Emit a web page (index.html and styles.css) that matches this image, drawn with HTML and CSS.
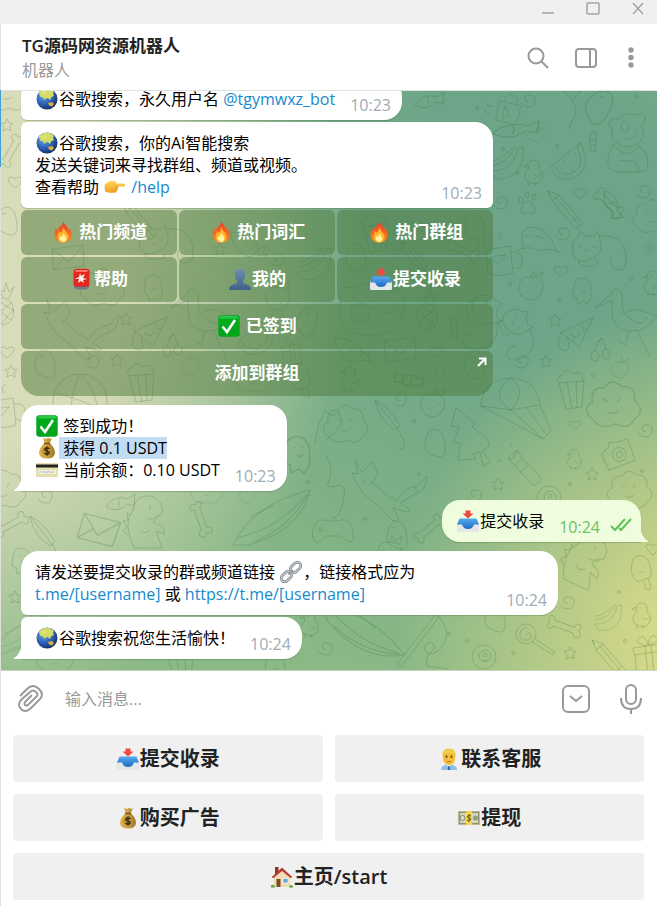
FILE: index.html
```html
<!DOCTYPE html>
<html lang="zh">
<head>
    <meta charset="UTF-8">
    <meta name="viewport" content="width=device-width, initial-scale=1.0">
    <title>TG源码网资源机器人</title>
    <link rel="stylesheet" href="styles.css">
</head>
<body>

<!-- shared emoji and wallpaper shapes -->
<svg class="defs" width="0" height="0" aria-hidden="true">
    <defs>
        <radialGradient id="sea" cx=".35" cy=".3" r=".75"><stop offset="0" stop-color="#6aa7e8"/><stop offset=".6" stop-color="#2a5fb4"/><stop offset="1" stop-color="#162d62"/></radialGradient>
        <linearGradient id="flame" x1="0" y1="0" x2="0" y2="1"><stop offset="0" stop-color="#e8402a"/><stop offset="1" stop-color="#ff8a1c"/></linearGradient>
        <linearGradient id="skin" x1="0" y1="0" x2="0" y2="1"><stop offset="0" stop-color="#ffd65a"/><stop offset="1" stop-color="#f2a21f"/></linearGradient>
        <linearGradient id="gold" x1="0" y1="0" x2="1" y2="0"><stop offset="0" stop-color="#e0b040"/><stop offset=".4" stop-color="#d3a94a"/><stop offset="1" stop-color="#9c7424"/></linearGradient>
        <linearGradient id="blue" x1="0" y1="0" x2="0" y2="1"><stop offset="0" stop-color="#56a8f0"/><stop offset="1" stop-color="#1d6cc0"/></linearGradient>
        <linearGradient id="slate" x1="0" y1="0" x2="0" y2="1"><stop offset="0" stop-color="#6f90b3"/><stop offset="1" stop-color="#3f6088"/></linearGradient>

        <symbol id="globe" viewBox="0 0 22 22">
            <circle cx="11" cy="11" r="10.5" fill="url(#sea)"/>
            <path d="M3 4.500Q6 1 11 .7L15 1.500 18 4 17 6 18 8 15.500 9 14 12 12.500 10.500 10.500 10 8.500 12 7 9.500 4.500 9 3.500 7Z" fill="#d3dc66"/>
            <path d="M5 4 9 3 11 5 9 7 6 6Z" fill="#e5e07a"/>
            <path d="M12 15l4-1 2 2-2 2.500-3-1Z" fill="#dcae45"/>
        </symbol>
        <symbol id="point" viewBox="0 0 22 22">
            <path d="M.5 9Q3 5.500 6.500 5L11 5Q13 5.500 12 7.500L20.500 7.500Q22 9 20.500 10.500L14 10.700Q15 12 13.700 13 14 14.500 12.600 15 12.500 16.500 11 16.700L5 16.700 1 15.500Z" fill="url(#skin)"/>
            <path d="M10 10.600h4M10 13h3.700M9.500 15h3" stroke="#dc9a2b" stroke-width=".7" fill="none"/>
        </symbol>
        <symbol id="fire" viewBox="0 0 22 22">
            <path d="M11 .5C13 4 17 6.500 17 9.500L18 7Q20 11 19.500 15C18.700 19.500 15.500 21.700 11 21.700S3.500 19.500 2.600 15Q2 11 4 7L5.500 10C6.500 5 11 5 11 .5Z" fill="url(#flame)"/>
            <path d="M11 6C12 10 16.300 11 16.500 16Q16 21 11 21T5.500 16C5.700 13 7 12 7 10L9 12Q11 10 11 6Z" fill="#ffb52c"/>
            <path d="M11 12Q15 16 14.300 18.500 13 21.500 11 21.300T7.500 18Q7.500 16 9 14.500L10 16Q11 14 11 12Z" fill="#fff3a0"/>
        </symbol>
        <symbol id="siren" viewBox="0 0 22 22">
            <path d="M3 17h15v2.500Q17 21.500 10.500 21.500T3 19.500Z" fill="#6d7f8d"/>
            <rect x="2.500" y=".8" width="16" height="18" rx="3" fill="#e3281f"/>
            <path d="M4 2h13l-1 2H5Z" fill="#ff7a68"/>
            <path d="M9 5l1 3 4-2-2 4 4 1-4 1 1 3-3-2-3 2 1-4-4 0 4-2Z" fill="#fff0ea"/>
        </symbol>
        <symbol id="person" viewBox="0 0 22 22">
            <path d="M11 .5C14.500 .5 16 3 16 6.500 16 9.500 15.300 11.500 14 12.500V15L20 17.500Q22 18.500 22 22H0Q0 18.500 2 17.500L8 15V12.500C6.700 11.500 6 9.500 6 6.500 6 3 7.500 .5 11 .5Z" fill="url(#slate)"/>
        </symbol>
        <symbol id="tray" viewBox="0 0 22 22">
            <path d="M0 13h22v7.500Q22 22 20.500 22h-19Q0 22 0 20.500Z" fill="#e6e7e8"/>
            <path d="M2.500 8.500h17L22 14.500h-5q-1.500 4.500-6 4.500t-6-4.500H0Z" fill="url(#blue)"/>
            <path d="M8.500 .5h5V3.500h3L11 8.500 5.500 3.500h3Z" fill="#f0493d"/>
        </symbol>
        <symbol id="check" viewBox="0 0 22 22">
            <rect x=".3" y=".3" width="21.400" height="21.400" rx="3" fill="#00a51c"/>
            <rect x="1.500" y="1" width="19" height="8" rx="2" fill="#2fc44a"/>
            <rect x="1.500" y="3.500" width="19" height="8" fill="#00ab1a"/>
            <path d="M4.500 11.500 9 17 17 5" stroke="#fff" stroke-width="2.600" fill="none"/>
        </symbol>
        <symbol id="bag" viewBox="0 0 22 22">
            <path d="M7 .8 10 2 12 .8 14.500 2 16 1.300 13.800 6Q18.700 10.500 19 16 18.500 21.500 11 21.500T3 16Q3.500 10.500 8.500 6Z" fill="url(#gold)"/>
            <path d="M8 6.500h6" stroke="#7a4e1c" stroke-width="1.500"/>
            <circle cx="11" cy="14" r="4.800" fill="#b98d35"/>
            <path d="M13.500 11.800Q11 10 9.300 11.500T11 14 12.700 16.500 8.500 16.300M11 9.500v9" stroke="#33280f" stroke-width="1.300" fill="none"/>
        </symbol>
        <symbol id="card" viewBox="0 0 22 22">
            <rect x="0" y="4" width="22" height="14" rx="1" fill="#e5dfae"/>
            <path d="M0 5.500h22v3H0Z" fill="#222"/>
            <path d="M2 11h18v4H2Z" fill="#f0eee0"/>
            <path d="M3 13.500l2-1 1 1 2-1 2 1 3-1 2 1 3-.7" stroke="#a5abb8" stroke-width=".7" fill="none"/>
        </symbol>
        <symbol id="link" viewBox="0 0 22 22">
            <g fill="none" stroke="#6c747b" stroke-width="2.600"><rect x="-6" y="-3.500" width="12" height="7" rx="3.500" transform="translate(6.500 15.500) rotate(-45)"/><rect x="-6" y="-3.500" width="12" height="7" rx="3.500" transform="translate(15.500 6.500) rotate(-45)"/></g>
            <g fill="none" stroke="#ccd1d5" stroke-width="1.300"><rect x="-6" y="-3.500" width="12" height="7" rx="3.500" transform="translate(6.500 15.500) rotate(-45)"/><rect x="-6" y="-3.500" width="12" height="7" rx="3.500" transform="translate(15.500 6.500) rotate(-45)"/></g>
            <path d="M8.500 13.500 13 9" stroke="#8d959b" stroke-width="2"/>
        </symbol>
        <symbol id="man" viewBox="0 0 22 22">
            <path d="M3 22q0-4 4-5h8q4 1 4 5Z" fill="#8fc0ea"/>
            <path d="M8 16h6l-3 3.500Z" fill="#e8eef4"/><path d="M10.300 18h1.400l.6 4h-2.600Z" fill="#2f6ba8"/>
            <rect x="5" y="2" width="12" height="15" rx="6" fill="#f5bd35"/>
            <path d="M4.300 9Q3 .5 11 .5T17.700 9L16.500 7 15 5H7L5.500 7Z" fill="#edd04d"/>
            <circle cx="8.500" cy="9" r=".9" fill="#513717"/><circle cx="13.500" cy="9" r=".9" fill="#513717"/>
            <path d="M9 13.500h4M7.500 7.500h2M12.500 7.500h2" stroke="#a46a1b" stroke-width=".8"/>
        </symbol>
        <symbol id="cash" viewBox="0 0 22 22">
            <rect x="0" y="4" width="22" height="14" fill="#b9bb98"/>
            <rect x="1.500" y="5.500" width="19" height="11" fill="#d5d6bc" stroke="#8d9274"/>
            <circle cx="4.500" cy="11" r="2.500" fill="#dfe0cb" stroke="#7b8c72"/><circle cx="17.500" cy="11" r="2.500" fill="#8ca07f"/>
            <path d="M8 4h6v14H8Z" fill="#f7d44c"/>
            <path d="M13 9Q11 7.500 9.700 9T11 11 12.300 13.200 9 13M11 7v8" stroke="#6c5419" fill="none"/>
        </symbol>
        <symbol id="house" viewBox="0 0 22 22">
            <path d="M4 1h3.500v5L4 9Z" fill="#9a3129"/>
            <path d="M3 10 11 3.500 19 10v11H3Z" fill="#efdcb4"/>
            <path d="M.8 11 11 1.500 21.200 11l-1.400 1.300L11 5 2.200 12.300Z" fill="#b73c34"/>
            <path d="M5.500 13h4v8h-4Z" fill="#7f482b"/><path d="M12 12.500h5V17h-5Z" fill="#62a8d6" stroke="#fff" stroke-width=".7"/>
            <path d="M0 19.500q2-2 4 1v1H0ZM18 21.500q1-4 4-1.500v1.500Z" fill="#62a13d"/>
        </symbol>

        <g id="d-spiral"><path d="M1 1Q-2 3-3-1T2-5 7 1 1 7-7 3"/></g>
        <g id="d-star"><path d="M0-6 2-2 6-1.500 3 1.500 4 6 0 4-4 6-3 1.500-6-1.500-2-2Z"/></g>
        <g id="d-heart"><path d="M0 6Q-7 1-7-3-5-7 0-3 5-7 7-3 7 1 0 6Z"/></g>
        <g id="d-dot"><circle r="1.500"/></g>
        <g id="d-candy"><path d="M-3-10h6l-1 4q3 2 1 5 2 3-1 5l1 5h-6l1-5q-3-2-1-5-2-3 1-5ZM-3-2h6M-2 3h5"/></g>
        <g id="d-bone"><path d="M-12-3H9Q9-8 13-7T14-1Q19 1 16 5T9 3H-11Q-13 8-16 6T-16 0Q-20-4-17-6T-12-3Z"/></g>
        <g id="d-fish"><path d="M-14 4Q-6-9 8-4L15-9 14 3 7 1Q-2 11-14 4ZM-8 1h1M-2-4q3 4 0 8"/></g>
        <g id="d-melon"><path d="M13-19Q27 6 5 17-11 20-16 5ZM13-19 10-15Q20 6 3 12-8 13-13 4M9-10v2M5 0h2M-3-2v2M-5 7h2M4 8h2M12 0h1"/></g>
        <g id="d-duck"><path d="M-4-4Q-7-12 0-13T6-4Q12 0 8 7T-6 8Q-11 1-4-4ZM-5-9-9-7-5-6M-1-9v1M1 1Q5 6 8 1M-4 9v4M2 9v4"/></g>
        <g id="d-cat"><path d="M-20 5Q-23-8-15-12L-13-18-8-13Q-3-14 1-12L5-18 7-9Q12 4-2 10T-20 5ZM6-13Q30-16 33 6 34 22 25 21T18 8M-14 11Q-17 19-2 17 8 17 3 11M-15-2l4-2M-1-3l4 2M-9 1q3 3 5-1"/></g>
        <g id="d-bear"><path d="M-14-14Q-21-22-12-25L-6-24Q-2-32 10-28L16-30Q23-25 15-17 22-7 12 0 3 7-8 1-17-4-13-15ZM-12 0Q-26 25-9 29H14Q26 28 20 11L12 1M-12 1Q0 19 13 3M-5-16a4 5 0 1 0 8 0a4 5 0 1 0-8 0M9-14v2M0-5q6 3 9-3M-8 18Q14 15 12 29"/></g>
        <g id="d-bird"><path d="M-14-23Q-18-32-9-31-3-28-5-14L-3-6Q8-14 18-8L30-4Q20 12 3 11-16 10-15-10L-15-20-32-12-17-25M-10-27v1M0-4Q14 10 20-3M2 11-2 25-9 20M10 10 23 37"/></g>
        <g id="d-berry"><path d="M-12-2Q-10-11 0-10 12-10 12 0 9 13-1 13-14 10-12-2ZM0-10 2-16 5-11 12-15 10-9M-6-3v1M1-4v1M6 0v1M-4 4v1M3 6v1"/></g>
        <g id="d-ghost"><path d="M-8-4Q-8-13 0-13T9-2Q10 9 5 13L1 10-4 13-5 7-9 5ZM-2-6v1M4-6v1M0 0q2 3 4-1"/></g>
        <g id="d-pizza"><path d="M17-18-15-4-9 1 3 11 17-18ZM-15-4Q-22 15-10 15-5 14-9 1M-5-3a4 4 0 1 0 8 0M7-11a3 3 0 1 0 5 4"/></g>
        <g id="d-egg"><path d="M-10 1Q-8-14 0-14T10 2 0 13-10 1ZM-5-7-1-8"/></g>
        <g id="d-mug"><path d="M-14-10 10-14 13 13Q-2 18-12 13ZM11-8Q23-10 22 1T13 7M-10-3 6-5-2 4ZM-8-18q-4-5 1-9M1-19q-4-5 1-9"/></g>
        <g id="d-mail"><path d="M-15-9 16-13 17 8-13 12ZM-15-9 2 4 16-13M-13 12-3 0"/></g>
        <g id="d-pencil"><path d="M-18-18-7-14 17 14 10 20-14-8ZM-14-8-7-14M12 8 5 14M-10-12 14 17M-18-18l3 5"/></g>
        <g id="d-fin"><path d="M-15 9Q-22-13-5-13 11-10 17 11M-22 10Q-9 5 0 11 12 7 22 13M-5-5 5-2M-14-5q4 3 7 0"/></g>
        <g id="d-balloon"><path d="M-10-2Q-11-18 0-18T10-2L1 8-10-2M0 9Q7 18 2 26T-2 38"/></g>
        <g id="d-umbrella"><path d="M-18-24Q-3-17 7 2L2 6Q-15-5-18-24ZM-18-24 4 4 10 15Q14 25 6 25"/></g>
        <g id="d-tree"><path d="M-10-32-15-14-7-13-13 2-6 3-8 20 10 19 7 14 14 12 17 26 24 22 16 10Q29 7 19-3L10-10 6-14 10-16Z"/></g>
        <g id="d-cloud"><path d="M-18 10Q-28 2-18-4-20-17-8-16-3-25 7-17 18-18 17-6 27 4 17 10 12 20 1 14-11 20-18 10ZM-9-7l4 3M5-8l-2 4M-5 4q4 3 9-1"/></g>
        <g id="d-chute"><path d="M-37-8Q-35-35-8-36 19-35 22-9L-7-4ZM-37-8 25 25 33 17 22-9M-8-36Q-30-18-7-4 11-25-8-36M-7-4 25 25M8-7 28 20"/></g>
        <g id="d-corn"><path d="M-12-6-5 20 11 18 13-8ZM-12-6Q-16-12-9-14-5-23 1-15 11-20 12-10L13-8M-4-7 1 20M5-8 6 19"/></g>
        <g id="d-torch"><path d="M-17-13-8-21-1-11 17 8 9 15-9-4ZM-17-13Q-12-8-8-21M-3-13-10-5M3-6-5 2M-15-28l2 4M-28-10h5"/></g>
        <g id="d-camera"><path d="M-15-7-6-10-3-14 5-11 15-10 13 13-15 11ZM-6 1a7 7 0 1 0 14 0a7 7 0 1 0-14 0M-2 1a3 3 0 1 0 6 0a3 3 0 1 0-6 0"/></g>
        <g id="d-fox"><path d="M-25-16-28-29-21-18-10-28-5-17-10-7Q1 5 14 11 20-2 34-4L44-14Q43 3 30 5L17 13 27 20 24 22 10 18 16 29 10 31-5 15Q-19 6-25-4L-31-17ZM-18-11l-2 3M-11-9l-2 4M30-4l5 6"/></g>
        <g id="d-dino"><path d="M-14 26Q-26 0-15-12-13-28 3-26 17-20 14-9L5 0 15 5 17 12 8 9 14 26ZM-17-7l-4-2 1 7-5 1 4 6-4 4 5 4M2-17v4M0-3q7 1 11-5M-8 8q4 5 10 0"/></g>
        <g id="d-rocket"><path d="M-37 27Q-16-15 40-28 31 12-21 27ZM-33 20Q8 11 37-24M-16 24Q22 8 38-24M-20-1 4-13"/></g>
        <g id="d-pad"><path d="M-18-3Q-14-12-5-8H6Q17-13 20-1 24 14 17 13L8 7H-6L-14 14Q-23 11-18-3ZM-12-2v6M-15 1h6M9-2v1M13 2v1"/></g>
        <g id="d-pine"><path d="M-9-3Q0-12 9-2 15 17 0 20-15 14-9-3ZM-8 2 8 15M-6-5 11 6M8-2-9 12M11 4-2 19M0-8-5-16 1-13 3-22 6-13 11-18 6-7"/></g>
        <g id="d-carrot"><path d="M-18-16Q3-15 11 0 6 11-2 8-15 0-18-16ZM10 1 19-2 15 4 20 8 9 7M-9-9l4-2M-3-1l4-3"/></g>
        <g id="d-pop"><path d="M-9-9Q-7-19 2-16 11-12 10 5L-3 10Q-12 4-9-9ZM2 9l3 8q4 2 5-1L7 6M-3-8v1M3-6v1M-2 0q3 2 5-1"/></g>
        <g id="d-lolly"><path d="M-10-1a10 10 0 1 0 20 0a10 10 0 1 0-20 0M6 7 27 20 29 17 9 4M0 0Q3-4 5 0T0 5-6-1 1-7"/></g>
        <g id="d-gift"><path d="M-14-7 14-11 15-4-13 0ZM-12 0-10 20 15 17 13-4M-2-9 1 19M4-10 7 18M0-9Q-14-12-8-17T1-10Q3-23 9-18T1-10"/></g>
        <g id="d-ball"><path d="M-12 0a12 12 0 1 0 24 0a12 12 0 1 0-24 0M-5-1a6 6 0 1 0 12 0a6 6 0 1 0-12 0M-1-2a2 2 0 1 0 4 0a2 2 0 1 0-4 0M-1 2a2 2 0 1 0 4 0"/></g>
        <g id="d-paw"><path d="M-6 5Q0-7 6 5 10 14 0 10-9 14-6 5M-9-2a2 3 0 1 0 4 0a2 3 0 1 0-4 0M-3-7a2 3 0 1 0 4 0a2 3 0 1 0-4 0M4-5a2 3 0 1 0 4 0a2 3 0 1 0-4 0"/></g>
        <g id="d-cherry"><path d="M-8 6a4 5 0 1 0 8 0a4 5 0 1 0-8 0M3 4a4 5 0 1 0 8 0a4 5 0 1 0-8 0M-4 1Q-2-9 3-12L7-1M3-12l-5 4"/></g>
        <g id="d-rod"><path d="M-24 26 15-24 18-21-20 29ZM15-24Q34-5 19 11 5 22 3 8 12 0 14 10 3 18 6 28L28 31"/></g>
        <g id="d-banana"><path d="M-16 9Q8 10 13-14L18-15Q20 18-10 17ZM-16 4Q2 3 11-16M-15-1Q-2-2 9-16"/></g>
    </defs>
</svg>

<div class="window">
    <div class="titlebar">
        <button class="win-btn" aria-label="最小化"><svg width="14" height="14" viewBox="0 0 14 14"><path d="M1 11h12"/></svg></button>
        <button class="win-btn" aria-label="最大化"><svg width="14" height="14" viewBox="0 0 14 14"><rect x="1" y="1" width="12" height="11" rx="1"/></svg></button>
        <button class="win-btn" aria-label="关闭"><svg width="14" height="14" viewBox="0 0 14 14"><path d="M2 1l10 11M12 1 2 12"/></svg></button>
    </div>

    <div class="main">
        <header class="header">
            <div class="peer">
                <h1>TG源码网资源机器人</h1>
                <p>机器人</p>
            </div>
            <button class="icon-btn" aria-label="搜索"><svg width="24" height="24" viewBox="0 0 24 24"><circle cx="9" cy="10" r="7.500"/><path d="M14.500 15.500 21 22"/></svg></button>
            <button class="icon-btn" aria-label="侧栏"><svg width="24" height="24" viewBox="0 0 24 24"><rect x="3" y="3" width="20" height="18" rx="3"/><path d="M17 3v18"/></svg></button>
            <button class="icon-btn" aria-label="更多"><svg class="dots" width="24" height="24" viewBox="0 0 24 24"><circle cx="12" cy="4" r="2.700"/><circle cx="12" cy="11.500" r="2.700"/><circle cx="12" cy="19" r="2.700"/></svg></button>
        </header>

        <main class="chat">
            <svg class="wallpaper" viewBox="1 91 656 579" preserveAspectRatio="xMidYMid slice" aria-hidden="true">
                <use href="#d-cloud" x="8" y="94"/><use href="#d-star" x="7" y="125"/><use href="#d-bone" transform="translate(12 150) rotate(-60)"/><use href="#d-heart" x="15" y="182"/><use href="#d-egg" x="7" y="221"/><use href="#d-pine" x="3" y="305"/><use href="#d-heart" x="7" y="352"/><use href="#d-star" x="11" y="371"/><use href="#d-mug" x="3" y="412"/><use href="#d-cloud" x="4" y="491"/><use href="#d-bone" transform="translate(12 524) rotate(-28)"/>
                <use href="#d-fish" x="429" y="101"/><use href="#d-dot" x="477" y="108"/><use href="#d-spiral" x="528" y="100"/><use href="#d-mug" transform="translate(507 112) rotate(-70) scale(.8)"/><use href="#d-fish" transform="translate(515 130) scale(1.600 1)"/><use href="#d-berry" transform="translate(536 135) scale(.7 .5)"/><use href="#d-balloon" x="572" y="92"/><use href="#d-egg" transform="translate(599 106) rotate(38) scale(1.200)"/><use href="#d-bear" x="626" y="143"/><use href="#d-dot" x="637" y="96"/><use href="#d-candy" x="593" y="142"/><use href="#d-melon" x="567" y="162"/><use href="#d-duck" x="533" y="173"/><use href="#d-banana" x="505" y="162"/><use href="#d-dot" x="557" y="146"/><use href="#d-dot" x="503" y="149"/><use href="#d-dot" x="517" y="173"/><use href="#d-heart" x="580" y="193"/><use href="#d-paw" x="528" y="202"/><use href="#d-pencil" x="566" y="209"/><use href="#d-bone" transform="translate(609 204) rotate(45)"/><use href="#d-fish" transform="translate(612 204) rotate(80)"/><use href="#d-spiral" x="643" y="191"/><use href="#d-spiral" x="500" y="202"/><use href="#d-cloud" transform="translate(653 218) scale(.9)"/>
                <use href="#d-fin" x="539" y="240"/><use href="#d-spiral" x="562" y="233"/><use href="#d-cat" x="593" y="249"/><use href="#d-ball" transform="translate(649 249) scale(.5)"/><use href="#d-mug" x="500" y="260"/><use href="#d-berry" x="531" y="287"/><use href="#d-heart" x="561" y="271"/><use href="#d-ghost" x="582" y="291"/><use href="#d-bird" x="627" y="320"/><use href="#d-duck" x="652" y="284"/><use href="#d-dot" x="559" y="300"/><use href="#d-dot" x="510" y="284"/><use href="#d-dot" x="631" y="279"/><use href="#d-cat" transform="translate(517 328) rotate(70) scale(.9)"/><use href="#d-star" x="555" y="320"/><use href="#d-pizza" x="576" y="336"/><use href="#d-cherry" x="599" y="350"/><use href="#d-spiral" x="521" y="361"/><use href="#d-star" x="546" y="361"/><use href="#d-berry" transform="translate(620 369) scale(.7)"/><use href="#d-dot" x="593" y="375"/><use href="#d-chute" x="518" y="414"/><use href="#d-corn" x="571" y="389"/><use href="#d-cloud" transform="translate(614 407) scale(1.200)"/>
                <use href="#d-pencil" x="140" y="220"/><use href="#d-cat" x="160" y="242"/><use href="#d-mail" x="67" y="258"/><use href="#d-ghost" x="153" y="288"/><use href="#d-star" x="220" y="249"/><use href="#d-banana" x="313" y="263"/><use href="#d-spiral" x="277" y="259"/><use href="#d-berry" x="278" y="297"/><use href="#d-carrot" x="248" y="248"/><use href="#d-cloud" x="103" y="289"/><use href="#d-bird" x="203" y="320"/><use href="#d-fox" x="75" y="329"/><use href="#d-star" x="126" y="319"/><use href="#d-pizza" x="150" y="335"/><use href="#d-cherry" x="171" y="346"/><use href="#d-melon" x="254" y="337"/><use href="#d-star" x="117" y="360"/><use href="#d-spiral" x="92" y="361"/><use href="#d-egg" x="45" y="364"/><use href="#d-egg" transform="translate(307 321) rotate(30)"/><use href="#d-gift" transform="translate(291 352) scale(.7)"/><use href="#d-corn" x="141" y="382"/><circle cx="80" cy="401" r="27"/><path d="M54 393Q80 398 104 412M80 374Q68 395 72 427M80 374Q98 390 99 420"/><use href="#d-berry" transform="translate(190 366) scale(.7)"/><use href="#d-cloud" transform="translate(253 379) scale(.8)"/><use href="#d-pop" x="300" y="380"/>
                <use href="#d-corn" x="375" y="232"/><use href="#d-star" x="397" y="245"/><use href="#d-pop" x="475" y="230"/><use href="#d-egg" x="356" y="258"/><use href="#d-umbrella" x="420" y="265"/><use href="#d-bone" transform="translate(464 251) rotate(25)"/><path d="M341 300Q335 285 352 288 370 279 392 289 408 290 403 312 400 332 374 336 345 336 339 318ZM352 313a9 7 0 1 0 17 0a9 7 0 1 0-17 0M382 302a9 7 0 1 0 15 0M371 308h6M372 316q5 3 8-1"/><use href="#d-pine" x="427" y="311"/><use href="#d-candy" x="454" y="329"/><use href="#d-cat" transform="translate(484 316) rotate(90)"/><use href="#d-carrot" x="352" y="353"/><use href="#d-mail" x="399" y="350"/><use href="#d-heart" x="436" y="352"/><use href="#d-egg" x="474" y="365"/><use href="#d-candy" transform="translate(408 380) rotate(100) scale(1.500)"/><use href="#d-star" x="440" y="371"/><use href="#d-duck" x="349" y="380"/>
                <path d="M315 444Q318 420 322 418L325 410 332 416 339 412 342 424Q334 434 326 440"/><use href="#d-ghost" transform="translate(297 455) scale(1.400)"/><use href="#d-cloud" x="346" y="426"/><use href="#d-umbrella" x="393" y="424"/><use href="#d-spiral" x="399" y="399"/><use href="#d-berry" x="433" y="404"/><use href="#d-egg" x="435" y="443"/><use href="#d-tree" x="466" y="440"/><use href="#d-dot" x="414" y="421"/><use href="#d-dot" x="419" y="474"/><use href="#d-torch" x="525" y="471"/><use href="#d-duck" transform="translate(574 460) scale(.8)"/><use href="#d-heart" transform="translate(575 425) scale(.8)"/><use href="#d-camera" transform="translate(618 454) rotate(-25)"/><use href="#d-spiral" x="645" y="430"/><use href="#d-star" x="592" y="474"/><use href="#d-star" x="498" y="484"/><use href="#d-spiral" x="474" y="495"/><use href="#d-fox" x="383" y="490"/><use href="#d-cloud" x="630" y="492"/><use href="#d-dot" x="642" y="471"/><use href="#d-dot" x="570" y="484"/><use href="#d-ball" x="549" y="498"/>
                <use href="#d-fish" x="120" y="503"/><use href="#d-spiral" x="45" y="496"/><use href="#d-dino" x="148" y="522"/><use href="#d-mail" transform="translate(97 530) rotate(22) scale(1.200)"/><use href="#d-umbrella" x="48" y="540"/><use href="#d-bone" transform="translate(201 520) rotate(70)"/><use href="#d-cloud" transform="translate(207 492) scale(.7)"/><use href="#d-rocket" x="270" y="518"/><use href="#d-berry" transform="translate(247 495) scale(.6)"/><use href="#d-pad" x="332" y="529"/><use href="#d-egg" x="397" y="535"/><use href="#d-bone" transform="translate(430 528) rotate(-40)"/><use href="#d-dot" x="365" y="519"/><use href="#d-dot" x="308" y="482"/><path d="M326 455Q334 470 329 480 324 490 336 486T343 502 332 517"/>
                <use href="#d-ghost" x="21" y="561"/><use href="#d-star" x="15" y="597"/><use href="#d-rocket" transform="translate(18 635) scale(.7)"/><use href="#d-duck" x="309" y="625"/><use href="#d-spiral" x="325" y="648"/><use href="#d-cloud" transform="translate(55 660) scale(.8)"/><use href="#d-corn" x="180" y="663"/><use href="#d-pop" x="275" y="669"/><use href="#d-rocket" transform="translate(362 630) rotate(65)"/><use href="#d-rod" x="421" y="638"/><use href="#d-egg" x="495" y="618"/><use href="#d-ball" x="484" y="657"/><use href="#d-dot" x="449" y="634"/><use href="#d-dot" x="467" y="641"/><use href="#d-dino" transform="translate(587 561) rotate(25)"/><use href="#d-pop" x="641" y="572"/><use href="#d-spiral" x="567" y="602"/><use href="#d-banana" transform="translate(607 617) scale(.8)"/><use href="#d-duck" x="641" y="616"/><use href="#d-bone" transform="translate(565 627) rotate(20)"/><use href="#d-lolly" x="526" y="635"/><use href="#d-star" x="570" y="653"/><use href="#d-pencil" x="610" y="658"/><use href="#d-gift" x="647" y="655"/><use href="#d-dot" x="513" y="653"/><use href="#d-dot" x="625" y="641"/><use href="#d-dot" x="619" y="592"/><use href="#d-heart" x="653" y="549"/><use href="#d-berry" x="390" y="552"/>
            </svg>

            <div class="group">
                <div class="bubble first-row">
                    <p><svg class="emoji"><use href="#globe"/></svg>谷歌搜索，永久用户名 <a href="#">@tgymwxz_bot</a></p>
                    <time>10:23</time>
                </div>
                <div class="bubble middle menu-width">
                    <p><svg class="emoji"><use href="#globe"/></svg>谷歌搜索，你的Ai智能搜索<br>发送关键词来寻找群组、频道或视频。<br>查看帮助 <svg class="emoji"><use href="#point"/></svg> <a href="#">/help</a></p>
                    <time>10:23</time>
                </div>
                <div class="inline-keys menu-width">
                    <button><svg class="emoji"><use href="#fire"/></svg> 热门频道</button>
                    <button><svg class="emoji"><use href="#fire"/></svg> 热门词汇</button>
                    <button><svg class="emoji"><use href="#fire"/></svg> 热门群组</button>
                    <button><svg class="emoji"><use href="#siren"/></svg>帮助</button>
                    <button><svg class="emoji"><use href="#person"/></svg>我的</button>
                    <button><svg class="emoji"><use href="#tray"/></svg>提交收录</button>
                    <button class="full"><svg class="emoji"><use href="#check"/></svg> 已签到</button>
                    <button class="full last">添加到群组<svg class="arrow" width="10" height="10" viewBox="0 0 10 10"><path d="M1 9 8 2M2 1.500h6.500V8"/></svg></button>
                </div>
            </div>

            <div class="group">
                <div class="bubble tail-left">
                    <p><svg class="emoji"><use href="#check"/></svg> 签到成功！<br><svg class="emoji"><use href="#bag"/></svg><mark> 获得 0.1 USDT</mark><br><svg class="emoji"><use href="#card"/></svg> 当前余额：0.10 USDT</p>
                    <time>10:23</time>
                    <svg class="tail" width="8" height="16" viewBox="0 0 8 16"><path d="M8 0Q7 11 0 15 0 16 1 16H8Z"/></svg>
                </div>
            </div>

            <div class="group">
                <div class="bubble out">
                    <p><svg class="emoji"><use href="#tray"/></svg>提交收录</p>
                    <time>10:24</time>
                    <svg class="ticks" width="22" height="14" viewBox="0 0 22 14"><path d="M1 8l4 4L15 1M9 10l2 2L21 1"/></svg>
                    <svg class="tail" width="8" height="16" viewBox="0 0 8 16"><path d="M0 0Q1 11 8 15 8 16 7 16H0Z"/></svg>
                </div>
            </div>

            <div class="group">
                <div class="bubble top wide">
                    <p>请发送要提交收录的群或频道链接 <svg class="emoji"><use href="#link"/></svg>，链接格式应为<br><a href="#">t.me/[username]</a> 或 <a href="#">https://t.me/[username]</a></p>
                    <time>10:24</time>
                </div>
                <div class="bubble tail-left end">
                    <p><svg class="emoji"><use href="#globe"/></svg>谷歌搜索祝您生活愉快！</p>
                    <time>10:24</time>
                    <svg class="tail" width="8" height="16" viewBox="0 0 8 16"><path d="M8 0Q7 11 0 15 0 16 1 16H8Z"/></svg>
                </div>
            </div>
        </main>

        <form class="composer">
            <button type="button" class="icon-btn" aria-label="附件"><svg width="28" height="30" viewBox="0 0 28 30"><path d="M3 12 10 5Q16-1 22 5T22 16L13 25Q8 29 4 25T4 16L13 8Q16 5 19 8T19 13L11 21Q9 22 8 21T8 18L15 11"/></svg></button>
            <input type="text" placeholder="输入消息..." aria-label="输入消息">
            <button type="button" class="icon-btn" aria-label="收起键盘"><svg width="28" height="30" viewBox="0 0 28 30"><rect x="1" y="2" width="26" height="26" rx="5"/><path d="M8 12l6 5 6-5"/></svg></button>
            <button type="button" class="icon-btn" aria-label="语音"><svg width="28" height="30" viewBox="0 0 28 30"><rect x="9" y="1" width="10" height="19" rx="5"/><path d="M4 14Q4 25 14 25T24 14M14 25v5"/></svg></button>
        </form>

        <div class="reply-keys">
            <button><svg class="emoji"><use href="#tray"/></svg>提交收录</button>
            <button><svg class="emoji"><use href="#man"/></svg>联系客服</button>
            <button><svg class="emoji"><use href="#bag"/></svg>购买广告</button>
            <button><svg class="emoji"><use href="#cash"/></svg>提现</button>
            <button class="full"><svg class="emoji"><use href="#house"/></svg>主页/start</button>
        </div>
    </div>
</div>

</body>
</html>
```
FILE: styles.css
```css
* {
    box-sizing: border-box;
}
body {
    margin: 0;
    font-family: "Open Sans", "Noto Sans CJK SC", sans-serif;
    font-size: 16px;
    line-height: 22px;
    color: #000;
    background-color: #fff;
}
button, input {
    font-family: inherit;
    border: none;
    padding: 0;
    background: none;
}
button {
    cursor: pointer;
}
h1, p {
    margin: 0;
}
a {
    color: #168acd;
    text-decoration: none;
}
.defs {
    position: absolute;
}
.window {
    display: flex;
    flex-direction: column;
    height: 100vh;
}

/* title bar */
.titlebar {
    display: flex;
    flex: none;
    justify-content: flex-end;
    gap: 31px;
    height: 24px;
    padding: 2px 12px 0;
    background-color: #f0f0f0;
}
.win-btn {
    display: flex;
    width: 14px;
    height: 14px;
}
.win-btn svg {
    fill: none;
    stroke: #a3a3a3;
    stroke-width: 1.5;
}
.main {
    display: flex;
    flex-direction: column;
    flex: 1;
    min-height: 0;
    border-left: 1px solid #e0e0e0;
}

/* header */
.header {
    position: relative;
    display: flex;
    flex: none;
    align-items: center;
    gap: 22px;
    padding: 10px 14px 8px 21px;
    border-bottom: 1px solid #dfe3df;
}
/* edge of the selected dialog in the list on the left */
.header::after {
    content: "";
    position: absolute;
    top: 100%;
    left: -1px;
    width: 1px;
    height: 77px;
    background-color: #419fd9;
}
.peer {
    flex: 1;
}
.peer h1 {
    font-size: 17px;
    line-height: 24px;
    font-weight: 600;
    color: #222;
}
.peer p {
    line-height: 24px;
    color: #999;
}
.icon-btn {
    display: flex;
}
.icon-btn svg {
    fill: none;
    stroke: #999;
    stroke-width: 2;
}
.icon-btn .dots {
    fill: #999;
    stroke: none;
}

/* messages */
.chat {
    position: relative;
    display: flex;
    flex-direction: column;
    flex: 1;
    justify-content: flex-end;
    gap: 9px;
    min-height: 0;
    padding: 0 16px 11px 20px;
    overflow: hidden;
    background:
        radial-gradient(ellipse 60% 78% at -6% 30%, #d9dcb9 42%, rgba(217, 220, 185, 0) 100%),
        radial-gradient(ellipse 46% 58% at 106% 95%, #d4d889 15%, rgba(212, 216, 137, 0) 100%),
        radial-gradient(ellipse 80% 85% at 80% 20%, #6ca588 25%, rgba(108, 165, 136, 0) 100%),
        #8bb986;
}
.wallpaper {
    position: absolute;
    inset: 0;
    width: 100%;
    height: 100%;
    fill: none;
    stroke: rgba(40, 105, 55, 0.24);
    stroke-width: 1;
}
.group {
    position: relative;
    display: flex;
    flex: none;
    flex-direction: column;
    align-items: flex-start;
    gap: 2px;
}
.bubble {
    position: relative;
    display: flex;
    justify-content: space-between;
    gap: 15px;
    max-width: 100%;
    padding: 10px 11px 10px 14px;
    border-radius: 18px;
    background-color: #fff;
    box-shadow: 0 1px 1px rgba(60, 100, 50, 0.3);
}
.bubble time {
    align-self: flex-end;
    font-size: 16px;
    line-height: 10px;
    color: #a0acb6;
}
.first-row {
    border-bottom-left-radius: 6px;
}
.middle {
    border-radius: 6px 18px 6px 6px;
}
.top {
    border-bottom-left-radius: 6px;
}
.end {
    border-top-left-radius: 6px;
}
.menu-width {
    width: 472px;
    max-width: 100%;
}
.wide {
    width: 537px;
}
.tail-left {
    border-bottom-left-radius: 0;
}
.tail {
    position: absolute;
    bottom: 0;
    left: -7px;
    fill: #fff;
}
.out {
    align-self: flex-end;
    border-bottom-right-radius: 0;
    background-color: #effdde;
}
.out time {
    color: #6cc264;
}
.out .tail {
    right: -7px;
    left: auto;
    fill: #effdde;
}
.ticks {
    align-self: flex-end;
    margin-left: -5px;
    margin-right: -2px;
    fill: none;
    stroke: #5dc452;
    stroke-width: 2;
}
.emoji {
    width: 22px;
    height: 22px;
    margin: 0 1px;
    vertical-align: top;
}
mark {
    display: inline-block;
    color: inherit;
    background-color: #c2dcf2;
    white-space: pre;
}

/* buttons under the bot message */
.inline-keys {
    display: grid;
    grid-template-columns: repeat(3, 1fr);
    gap: 2px;
}
.inline-keys button {
    position: relative;
    height: 45px;
    padding-bottom: 2px;
    border-radius: 6px;
    font-size: 17px;
    line-height: 22px;
    font-weight: 600;
    color: #fff;
    background-color: rgba(78, 122, 60, 0.5);
}
.inline-keys .full {
    grid-column: 1 / -1;
}
.inline-keys .last {
    border-radius: 6px 6px 18px 18px;
}
.arrow {
    position: absolute;
    top: 6px;
    right: 6px;
    fill: none;
    stroke: #fff;
    stroke-width: 2;
}

/* message field */
.composer {
    display: flex;
    flex: none;
    align-items: center;
    padding: 13px 12px 15px 16px;
    border-top: 1px solid #c9d3c2;
}
.composer input {
    flex: 1;
    min-width: 0;
    height: 30px;
    margin-left: 20px;
    font-size: 16px;
    outline: none;
}
.composer input::placeholder {
    color: #999;
}
.composer .icon-btn + .icon-btn {
    margin-left: 27px;
}

/* bot reply keyboard */
.reply-keys {
    display: grid;
    flex: none;
    grid-template-columns: 1fr 1fr;
    gap: 12px;
    padding: 6px 13px 6px 12px;
}
.reply-keys button {
    height: 47px;
    border-radius: 4px;
    font-size: 20px;
    line-height: 22px;
    font-weight: 600;
    color: #222;
    background-color: #f0f0f0;
}
.reply-keys .full {
    grid-column: 1 / -1;
}
```
